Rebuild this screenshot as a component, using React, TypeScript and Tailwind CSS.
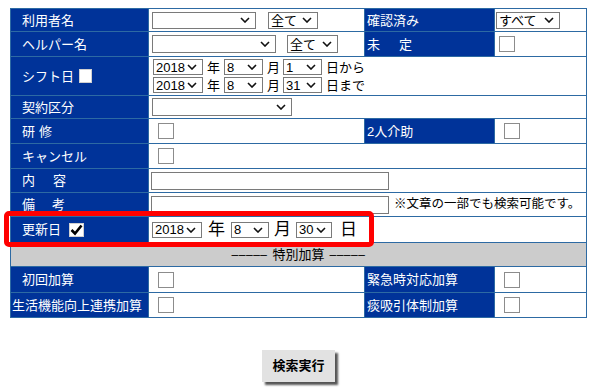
import React from 'react';

const label = 'bg-[#003399] text-white flex items-center text-[13px] leading-none';
const cell = 'bg-white flex items-center';

function Chevron() {
    return (
        <svg width="10" height="6" viewBox="0 0 10 6" className="absolute right-[5px] top-1/2 -translate-y-1/2 pointer-events-none">
            <path d="M1 1 L5 5 L9 1" fill="none" stroke="#111" strokeWidth="1.6" />
        </svg>
    );
}

// drop-down drawn as a box so the text sits like the old IE controls
const Select: React.FC<{ size: string; value: string }> = ({ size, value }) => (
    <span className={`relative inline-flex items-center shrink-0 bg-white border border-[#7a7a7a] pl-[2px] text-[13px] leading-none text-black whitespace-nowrap ${size}`}>
        {value}
        <Chevron />
    </span>
);

const Check: React.FC<{ checked?: boolean; className?: string }> = ({ checked, className }) => (
    <span className={`inline-flex items-center justify-center shrink-0 bg-white border border-[#8c8c8c] ${className ?? 'w-[16px] h-[16px]'}`}>
        {checked && (
            <svg width="13" height="12" viewBox="0 0 13 12">
                <path d="M1.5 6 L5 9.5 L11.5 1.5" fill="none" stroke="#000" strokeWidth="2.6" />
            </svg>
        )}
    </span>
);

export default function App() {
    return (
        <div className="relative w-[597px] h-[390px] bg-white font-['Liberation_Sans','Noto_Sans_CJK_JP',sans-serif] text-black">
            <div className="ml-[10px] pt-[8px]">
                <div className="grid grid-cols-[137px_215px_129px_91px] grid-rows-[22px_24px_38px_22px_24px_24px_23px_23px_25px_23px_25px_24px] gap-px p-px bg-[#2d6aa3] w-[577px]">
                    {/* 利用者名 */}
                    <div className={`${label} pl-[11px]`}>利用者名</div>
                    <div className={`${cell} pl-[3px] gap-[12px]`}>
                        <Select size="w-[104px] h-[17px]" value="" />
                        <Select size="w-[50px] h-[17px]" value="全て" />
                    </div>
                    <div className={`${label} pl-[2px]`}>確認済み</div>
                    <div className={`${cell} pl-[1px]`}>
                        <Select size="w-[64px] h-[17px]" value="すべて" />
                    </div>

                    {/* ヘルパー名 */}
                    <div className={`${label} pl-[11px]`}>ヘルパー名</div>
                    <div className={`${cell} pl-[3px] gap-[11px]`}>
                        <Select size="w-[124px] h-[18px]" value="" />
                        <Select size="w-[51px] h-[18px]" value="全て" />
                    </div>
                    <div className={`${label} pl-[2px]`}>未<span className="ml-[19px]">定</span></div>
                    <div className={`${cell} pl-[4px]`}>
                        <Check />
                    </div>

                    {/* シフト日 */}
                    <div className={`${label} pl-[11px]`}>
                        シフト日
                        <Check className="ml-[5px] w-[13px] h-[14px] border-[#d0d0d0]" />
                    </div>
                    <div className={`${cell} col-span-3 pl-[4px] flex-col items-start justify-center gap-[2px] text-[13px] leading-none`}>
                        {[['1', '日から'], ['31', '日まで']].map(([d, t]) => (
                            <div key={t} className="flex items-center">
                                <Select size="w-[50px] h-[16px]" value="2018" />
                                <span className="mx-[4px]">年</span>
                                <Select size="w-[39px] h-[16px]" value="8" />
                                <span className="ml-[4px] mr-[3px]">月</span>
                                <Select size="w-[39px] h-[16px]" value={d} />
                                <span className="ml-[4px]">{t}</span>
                            </div>
                        ))}
                    </div>

                    {/* 契約区分 */}
                    <div className={`${label} pl-[11px]`}>契約区分</div>
                    <div className={`${cell} col-span-3 pl-[3px]`}>
                        <Select size="w-[140px] h-[18px]" value="" />
                    </div>

                    {/* 研修 */}
                    <div className={`${label} pl-[11px]`}>研<span className="ml-[4px]">修</span></div>
                    <div className={`${cell} pl-[9px]`}>
                        <Check />
                    </div>
                    <div className={`${label} pl-[2px]`}>2人介助</div>
                    <div className={`${cell} pl-[9px]`}>
                        <Check />
                    </div>

                    {/* キャンセル */}
                    <div className={`${label} pl-[11px]`}>キャンセル</div>
                    <div className={`${cell} col-span-3 pl-[9px]`}>
                        <Check />
                    </div>

                    {/* 内容 */}
                    <div className={`${label} pl-[11px]`}>内<span className="ml-[18px]">容</span></div>
                    <div className={`${cell} col-span-3 pl-[2px]`}>
                        <input type="text" className="w-[238px] h-[18px] border border-[#7a7a7a] bg-white outline-none" />
                    </div>

                    {/* 備考 */}
                    <div className={`${label} pl-[11px]`}>備<span className="ml-[17px]">考</span></div>
                    <div className={`${cell} col-span-3 pl-[2px] text-[12.5px] leading-none whitespace-nowrap`}>
                        <input type="text" className="w-[238px] h-[18px] border border-[#7a7a7a] bg-white outline-none shrink-0" />
                        <span className="ml-[5px]">※文章の一部でも検索可能です。</span>
                    </div>

                    {/* 更新日 */}
                    <div className={`${label} pl-[11px]`}>
                        更新日
                        <Check checked className="ml-[8px] w-[15px] h-[14px] border-[#d0d0d0]" />
                    </div>
                    <div className={`${cell} col-span-3 pl-[3px] text-[17px] leading-none`}>
                        <Select size="w-[50px] h-[16px]" value="2018" />
                        <span className="ml-[6px] mr-[6px]">年</span>
                        <Select size="w-[38px] h-[16px]" value="8" />
                        <span className="ml-[5px] mr-[5px]">月</span>
                        <Select size="w-[36px] h-[16px]" value="30" />
                        <span className="ml-[8px]">日</span>
                    </div>

                    {/* 特別加算 */}
                    <div className="col-span-4 bg-[#cccccc] flex items-center justify-center text-[13px] leading-none">
                        <span className="text-[12px] tracking-[0.5px]">–––––</span>
                        <span className="mx-[5px]">特別加算</span>
                        <span className="text-[12px] tracking-[0.5px]">–––––</span>
                    </div>

                    {/* 初回加算 */}
                    <div className={`${label} pl-[11px]`}>初回加算</div>
                    <div className={`${cell} pl-[9px]`}>
                        <Check />
                    </div>
                    <div className={`${label} pl-[2px]`}>緊急時対応加算</div>
                    <div className={`${cell} pl-[9px]`}>
                        <Check />
                    </div>

                    {/* 生活機能向上連携加算 */}
                    <div className={`${label} pl-[1px]`}>生活機能向上連携加算</div>
                    <div className={`${cell} pl-[9px]`}>
                        <Check />
                    </div>
                    <div className={`${label} pl-[2px]`}>痰吸引体制加算</div>
                    <div className={`${cell} pl-[9px]`}>
                        <Check />
                    </div>
                </div>
            </div>

            <div className="flex justify-center mt-[32px]">
                <button className="w-[73px] h-[32px] bg-[#e2e2e2] shadow-[3px_3px_2px_#555] text-[13px] font-bold text-black">
                    検索実行
                </button>
            </div>

            {/* highlight */}
            <div className="absolute left-[4px] top-[211px] w-[370px] h-[36px] border-[5px] border-[#ff0000] rounded-[5px] pointer-events-none" />
        </div>
    );
}
